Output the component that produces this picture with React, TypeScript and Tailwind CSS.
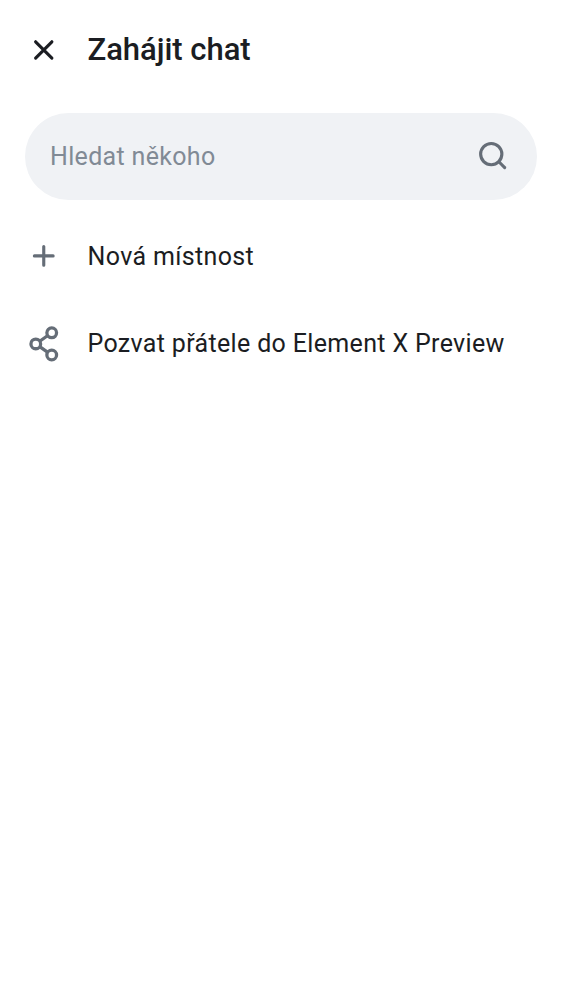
export default function App() {
  return (
    <main className="flex h-[1000px] w-[562px] flex-col bg-white font-['Roboto',sans-serif] text-[#1b1d22]">
      <header className="flex h-[100px] items-center pl-[25px]">
        <button aria-label="Zavřít" className="mr-[25px] flex size-[37.5px] items-center justify-center">
          <svg viewBox="0 0 24 24" className="size-[37.5px]" fill="none" stroke="currentColor" strokeWidth="2" strokeLinecap="round">
            <path d="M6.8 6.9 17.2 17.3M17.2 6.9 6.8 17.3" />
          </svg>
        </button>
        <h1 className="text-[31px] font-medium leading-[38px] tracking-[-0.03px]">Zahájit chat</h1>
      </header>
      <div className="mx-[25px] mt-[12.5px] flex h-[87.5px] items-center justify-between rounded-full bg-[#f0f2f5] px-[25px]">
        <span className="pt-px text-[25px] tracking-[0.33px] text-[#818a95]">Hledat někoho</span>
        <svg viewBox="0 0 24 24" className="size-[37.5px]" fill="none" stroke="#656d77" strokeWidth="2" strokeLinecap="round">
          <circle cx="10.4" cy="10.3" r="6.8" />
          <path d="m15.3 15.2 3.7 3.7" />
        </svg>
      </div>
      <ul className="mt-[12px]">
        <li className="flex h-[87.5px] items-center pl-[25px]">
          <svg viewBox="0 0 24 24" className="mr-[25px] size-[37.5px]" fill="none" stroke="#656d77" strokeWidth="2" strokeLinecap="round">
            <path d="M12 6.1v12M6 12.1h12" />
          </svg>
          <span className="pt-px text-[25px] tracking-[0.36px]">Nová místnost</span>
        </li>
        <li className="flex h-[87.5px] items-center pl-[25px]">
          <svg viewBox="0 0 24 24" className="mr-[25px] size-[37.5px]" fill="none" stroke="#656d77" strokeWidth="2.1">
            <circle cx="17.1" cy="5" r="3.1" />
            <circle cx="6.9" cy="12.1" r="3.1" />
            <circle cx="17.1" cy="19.2" r="3.1" />
            <path d="m9.4 10.4 5.2-3.7M9.4 13.8l5.2 3.7" />
          </svg>
          <span className="text-[25px] tracking-[0.34px]">Pozvat přátele do Element X Preview</span>
        </li>
      </ul>
    </main>
  );
}
